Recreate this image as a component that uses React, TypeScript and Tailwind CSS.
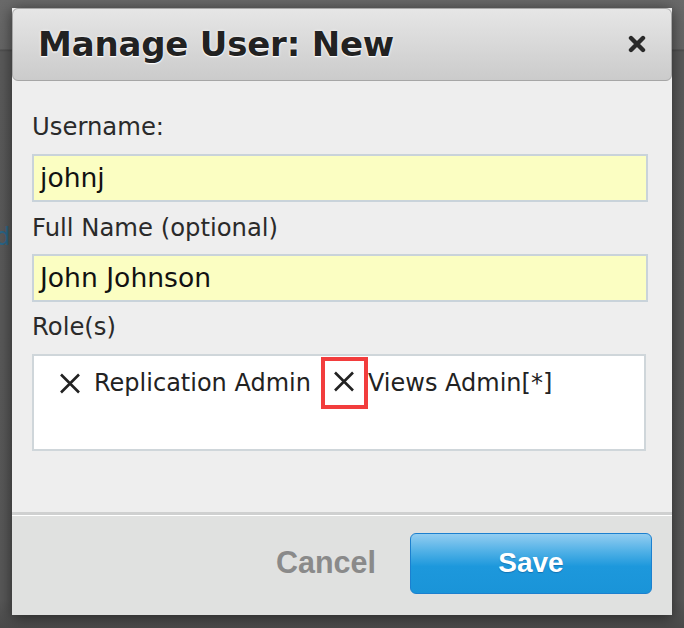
import React from 'react';

const RemoveIcon: React.FC = () => (
    <svg width="22" height="21" viewBox="0 0 22 21" className="shrink-0">
        <path d="M2 1.5 L20 19.5 M20 1.5 L2 19.5" stroke="#222" strokeWidth="2.6" fill="none" />
    </svg>
);

const App: React.FC = () => {
    return (
        <div className="relative w-[684px] h-[628px] overflow-hidden bg-[linear-gradient(to_bottom,#6a6a6a_0px,#666_49px,#4d4d4d_50px,#5a5a5a_52px,#585858_600px,#4a4a4a_628px)] font-['DejaVu_Sans',sans-serif]">
            {/* page text peeking from behind the overlay */}
            <span className="absolute left-[-5px] top-[219px] text-[24px] text-[#2b6688]">d</span>

            <div className="relative ml-[12px] mt-[8px] w-[660px] bg-[#eeeeee] shadow-[0_2px_14px_rgba(0,0,0,0.55)]">
                <div className="h-[73px] flex items-center justify-between pl-[25px] pr-[25px] rounded-[6px] border border-[#a6a6a6] bg-[linear-gradient(to_bottom,#e6e6e6,#cbcbcb)]">
                    <h2 className="text-[34px] font-bold text-[#222] tracking-[-0.2px] [text-shadow:0_0_3px_#fff,0_1px_1px_#fff]">
                        Manage User: New
                    </h2>
                    <button className="mt-[-2px]">
                        <svg width="18" height="18" viewBox="0 0 18 18">
                            <path d="M3 3 L15 15 M15 3 L3 15" stroke="#2a2a2a" strokeWidth="4.4" strokeLinecap="round" fill="none" />
                        </svg>
                    </button>
                </div>

                <div className="pl-[20px] pr-[24px] pt-[31px] h-[431px]">
                    <label className="block h-[30px] leading-[30px] text-[24.3px] text-[#2a2a2a]">Username:</label>
                    <div className="mt-[12px] h-[48px] w-[616px] border-2 border-[#c9d3da] bg-[#fbfec2] flex items-center px-[6px] text-[26.6px] text-[#111]">
                        johnj
                    </div>

                    <label className="block mt-[11px] h-[30px] leading-[30px] text-[24.3px] text-[#2a2a2a]">Full Name (optional)</label>
                    <div className="mt-[11px] h-[48px] w-[616px] border-2 border-[#c9d3da] bg-[#fbfec2] flex items-center px-[6px] text-[26.6px] text-[#111]">
                        John Johnson
                    </div>

                    <label className="block mt-[10px] h-[30px] leading-[30px] text-[24.3px] text-[#2a2a2a]">Role(s)</label>
                    <div className="mt-[12px] h-[97px] w-[614px] border-2 border-[#cfd6da] bg-white pt-[13px] pl-[25px]">
                        <div className="flex items-center h-[28px] text-[24px] text-[#222]">
                            <RemoveIcon />
                            <span className="ml-[13px]">Replication Admin</span>
                            <span className="ml-[10px] w-[47px] h-[52px] border-4 border-[#f23d3d] flex items-center justify-center pr-[1px] pb-[3px]">
                                <RemoveIcon />
                            </span>
                            <span>Views Admin[*]</span>
                        </div>
                    </div>
                </div>

                <div className="border-t-[3px] border-[#cfd0d0]">
                    <div className="border-t border-white h-[100px] bg-[#e0e1e0] flex items-center justify-end pr-[20px] pb-[5px]">
                        <button className="font-['Liberation_Sans',sans-serif] font-bold text-[30.5px] text-[#8a8a8a] mr-[34px]">
                            Cancel
                        </button>
                        <button className="w-[242px] h-[61px] rounded-[6px] border border-[#1c80cf] bg-[linear-gradient(to_bottom,#93cdf1_0%,#4fb0e6_30%,#1d98dc_55%,#1a94d8_100%)] font-['Liberation_Sans',sans-serif] font-bold text-[28px] text-white [text-shadow:0_1px_1px_rgba(0,60,120,0.4)]">
                            Save
                        </button>
                    </div>
                </div>
            </div>
        </div>
    );
};

export default App;
